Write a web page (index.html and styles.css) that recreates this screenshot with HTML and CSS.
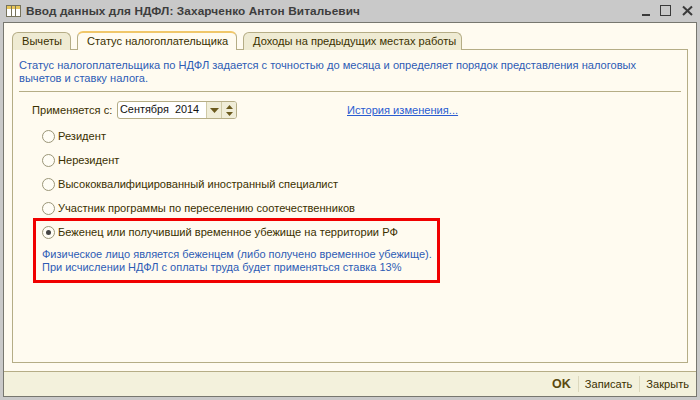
FILE: index.html
```html
<!DOCTYPE html>
<html lang="ru">
<head>
<meta charset="utf-8">
<title>Ввод данных для НДФЛ</title>
<link rel="stylesheet" href="styles.css">
</head>
<body>
<div class="window">
  <header class="titlebar">
    <svg class="app-icon" width="15" height="12" viewBox="0 0 15 12"><rect x="0.5" y="0.5" width="14" height="11" fill="#fff" stroke="#77735c"/><rect x="1" y="1" width="13" height="3" fill="#e8c65a"/><path d="M5.500 1v10M9.500 1v10" stroke="#77735c"/></svg>
    <span class="title">Ввод данных для НДФЛ: Захарченко Антон Витальевич</span>
    <div class="controls">
      <svg width="52" height="14" viewBox="0 0 52 14"><path d="M0 11h8" stroke="#3a3a3a" stroke-width="2"/><rect x="18.500" y="1.500" width="10" height="10" fill="none" stroke="#3a3a3a"/><path d="M18 1.500h11" stroke="#3a3a3a" stroke-width="1"/><path d="M41 2.500l9 8.500M50 2.500l-9 8.500" stroke="#3a3a3a" stroke-width="2"/></svg>
    </div>
  </header>
  <div class="client">
    <main class="content">
      <nav class="tabs">
        <div class="tab">Вычеты</div>
        <div class="tab active">Статус налогоплательщика</div>
        <div class="tab">Доходы на предыдущих местах работы</div>
      </nav>
      <section class="pane">
        <p class="info">Статус налогоплательщика по НДФЛ задается с точностью до месяца и определяет порядок представления налоговых<br>вычетов и ставку налога.</p>
        <hr class="rule">
        <div class="date-row">
          <label class="date-label">Применяется с:</label>
          <div class="date-field">
            <span class="date-value">Сентября&nbsp; 2014</span>
            <span class="date-btn"><svg width="9" height="5" viewBox="0 0 9 5"><path d="M0 0h9L4.500 5z" fill="#6b5a1e"/></svg></span>
            <span class="date-btn spin"><svg width="7" height="11" viewBox="0 0 7 11"><path d="M3.500 0L7 4H0zM3.500 11L0 7h7z" fill="#6b5a1e"/></svg></span>
          </div>
          <a class="history" href="#">История изменения...</a>
        </div>
        <div class="options">
          <div class="option"><span class="radio"></span>Резидент</div>
          <div class="option"><span class="radio"></span>Нерезидент</div>
          <div class="option"><span class="radio"></span>Высококвалифицированный иностранный специалист</div>
          <div class="option"><span class="radio"></span>Участник программы по переселению соотечественников</div>
        </div>
        <div class="highlight">
          <div class="option selected"><span class="radio checked"></span>Беженец или получивший временное убежище на территории РФ</div>
          <p class="note">Физическое лицо является беженцем (либо получено временное убежище).<br>При исчислении НДФЛ с оплаты труда будет применяться ставка 13%</p>
        </div>
      </section>
    </main>
    <footer class="actions">
      <span class="action ok">OK</span>
      <span class="action">Записать</span>
      <span class="action">Закрыть</span>
    </footer>
  </div>
</div>
</body>
</html>
```

FILE: styles.css
```css
html, body { margin: 0; padding: 0; }
body { width: 700px; height: 400px; overflow: hidden; font-family: "Liberation Sans", Arial, sans-serif; font-size: 11.100px; color: #3a3000; }
.window { width: 700px; height: 400px; box-sizing: border-box; background: #c9c9c9; padding: 0 3px 3px 3px; display: flex; flex-direction: column; }
.titlebar { height: 22px; flex: none; display: flex; align-items: center; padding-left: 3px; }
.app-icon { flex: none; margin-right: 5px; }
.title { font-weight: bold; font-size: 11.800px; color: #3d3d3d; letter-spacing: 0.100px; }
.controls { margin-left: auto; display: flex; padding-right: 3px; }
.client { flex: 1; min-height: 0; display: flex; flex-direction: column; border: 1px solid #77776f; background: #fffbf0; }
.content { flex: 1; min-height: 0; display: flex; flex-direction: column; padding: 8px; border-bottom: 1px solid #b5ad86; }
.tabs { display: flex; height: 19px; flex: none; margin-bottom: -1px; position: relative; z-index: 1; }
.tab { box-sizing: border-box; height: 18px; margin-top: 1px; padding: 2px 9px 0; border: 1px solid #b5ad86; border-bottom: none; border-radius: 6px 6px 0 0; background: #efebd3; margin-right: 6px; white-space: nowrap; }
.tab:nth-child(1) { width: 59px; }
.tab.active { width: 160px; height: 19px; margin-top: 0; background: #fffbf0; border-top: 2px solid #f0c76a; padding: 2px 9px 0; }
.tab:nth-child(3) { width: 219px; }
.pane { flex: 1; min-height: 0; border: 1px solid #b5ad86; padding: 9px 6px 0; background: #fffbf0; }
.info { margin: 0; line-height: 13px; color: #2d5bb5; }
.rule { border: 0; border-top: 1px solid #b5ad86; margin: 6px 0 0; }
.date-row { display: flex; align-items: center; height: 18px; margin-top: 9px; padding-left: 13px; }
.date-label { width: 85px; flex: none; }
.date-field { display: flex; width: 120px; height: 18px; flex: none; box-sizing: border-box; border: 1px solid #b5ad86; border-radius: 3px; background: #fff; overflow: hidden; }
.date-value { flex: 1; padding: 1px 0 0 2px; color: #111; white-space: nowrap; font-size: 10.900px; }
.date-btn { width: 15px; flex: none; display: flex; align-items: center; justify-content: center; background: #f0edd8; border-left: 1px solid #cfc9a6; box-sizing: border-box; }
.history { margin-left: 110px; color: #2a5cd0; text-decoration: underline; white-space: nowrap; }
.options { margin-top: 5px; }
.option { display: flex; align-items: center; height: 24px; padding-left: 23px; white-space: nowrap; }
.radio { width: 11px; height: 11px; flex: none; border: 1px solid #9b9678; border-radius: 50%; background: #fffdf5; margin-right: 3px; position: relative; }
.radio.checked::after { content: ""; position: absolute; left: 3px; top: 3px; width: 5px; height: 5px; border-radius: 50%; background: #444; }
.highlight { box-sizing: border-box; width: 407px; height: 65px; margin: -2px 0 0 14px; border: 3px solid #f00000; }
.option.selected { padding-left: 6px; height: 22px; }
.note { margin: 5px 0 0 6px; line-height: 13px; color: #2d5bb5; white-space: nowrap; font-size: 11px; }
.actions { height: 24px; flex: none; display: flex; justify-content: flex-end; align-items: center; background: #f3f1dc; }
.action { padding: 0 7px 0 6px; line-height: 16px; border-left: 1px solid #dcd8bd; }
.action.ok { border-left: none; font-weight: bold; font-size: 12.500px; color: #5a4a10; }
```
